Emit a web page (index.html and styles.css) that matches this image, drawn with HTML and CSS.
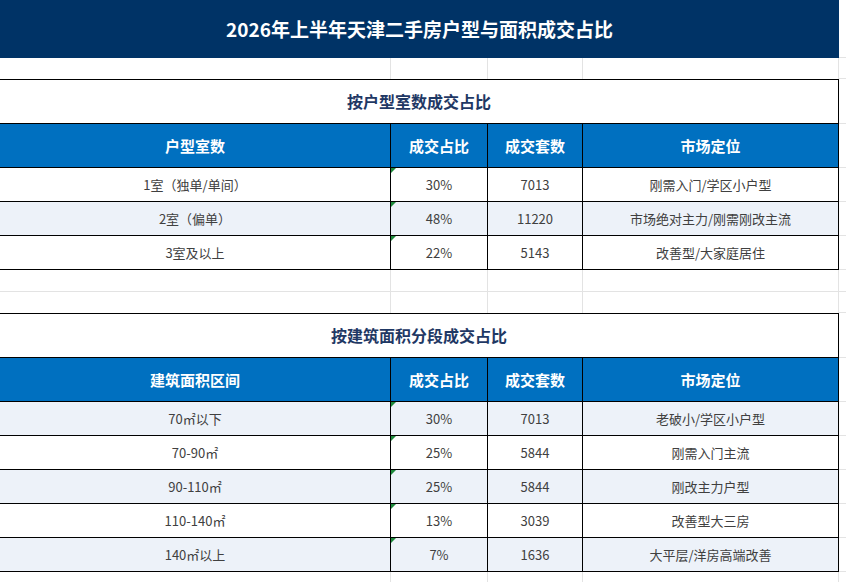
FILE: index.html
```html
<!DOCTYPE html>
<html lang="zh-CN">
<head>
<meta charset="utf-8">
<title>2026年上半年天津二手房户型与面积成交占比</title>
<link rel="stylesheet" href="styles.css">
</head>
<body>
<div class="sheet">
  <div class="row r-title">
    <div class="title">2026年上半年天津二手房户型与面积成交占比</div>
    <div class="cx"></div>
  </div>
  <div class="row r-blank h21">
    <div class="g c1"></div><div class="g c2"></div><div class="g c3"></div><div class="g c4"></div><div class="cx"></div>
  </div>

  <div class="row r-sec">
    <div class="sec">按户型室数成交占比</div>
    <div class="cx"></div>
  </div>
  <div class="row r-head">
    <div class="hd c1">户型室数</div><div class="hd c2">成交占比</div><div class="hd c3">成交套数</div><div class="hd c4">市场定位</div><div class="cx"></div>
  </div>
  <div class="row r-data">
    <div class="d c1">1室（独单/单间）</div><div class="d c2 mark">30%</div><div class="d c3">7013</div><div class="d c4">刚需入门/学区小户型</div><div class="cx"></div>
  </div>
  <div class="row r-data alt">
    <div class="d c1">2室（偏单）</div><div class="d c2 mark">48%</div><div class="d c3">11220</div><div class="d c4">市场绝对主力/刚需刚改主流</div><div class="cx"></div>
  </div>
  <div class="row r-data">
    <div class="d c1">3室及以上</div><div class="d c2 mark">22%</div><div class="d c3">5143</div><div class="d c4">改善型/大家庭居住</div><div class="cx"></div>
  </div>

  <div class="row r-blank h22 lined">
    <div class="g c1"></div><div class="g c2"></div><div class="g c3"></div><div class="g c4"></div><div class="cx"></div>
  </div>
  <div class="row r-blank h21">
    <div class="g c1"></div><div class="g c2"></div><div class="g c3"></div><div class="g c4"></div><div class="cx"></div>
  </div>

  <div class="row r-sec">
    <div class="sec">按建筑面积分段成交占比</div>
    <div class="cx"></div>
  </div>
  <div class="row r-head">
    <div class="hd c1">建筑面积区间</div><div class="hd c2">成交占比</div><div class="hd c3">成交套数</div><div class="hd c4">市场定位</div><div class="cx"></div>
  </div>
  <div class="row r-data alt">
    <div class="d c1">70㎡以下</div><div class="d c2 mark">30%</div><div class="d c3">7013</div><div class="d c4">老破小/学区小户型</div><div class="cx"></div>
  </div>
  <div class="row r-data">
    <div class="d c1">70-90㎡</div><div class="d c2 mark">25%</div><div class="d c3">5844</div><div class="d c4">刚需入门主流</div><div class="cx"></div>
  </div>
  <div class="row r-data alt">
    <div class="d c1">90-110㎡</div><div class="d c2 mark">25%</div><div class="d c3">5844</div><div class="d c4">刚改主力户型</div><div class="cx"></div>
  </div>
  <div class="row r-data">
    <div class="d c1">110-140㎡</div><div class="d c2 mark">13%</div><div class="d c3">3039</div><div class="d c4">改善型大三房</div><div class="cx"></div>
  </div>
  <div class="row r-data alt">
    <div class="d c1">140㎡以上</div><div class="d c2 mark">7%</div><div class="d c3">1636</div><div class="d c4">大平层/洋房高端改善</div><div class="cx"></div>
  </div>

  <div class="row r-blank h22">
    <div class="g c1"></div><div class="g c2"></div><div class="g c3"></div><div class="g c4"></div><div class="cx"></div>
  </div>
</div>
</body>
</html>
```

FILE: styles.css
```css
html, body {
  margin: 0;
  padding: 0;
  background: #ffffff;
}
body {
  font-family: "Noto Sans CJK SC", "Noto Sans", "Liberation Sans", sans-serif;
  color: #404040;
  overflow: hidden;
}
.sheet {
  width: 846px;
}
.row {
  display: flex;
}
.row > div {
  box-sizing: border-box;
}
.c1 { width: 391px; }
.c2 { width: 97px; }
.c3 { width: 95px; }
.c4 { width: 256px; }
.cx {
  flex: 1;
  border-bottom: 1px solid #e3e3e3;
}

/* title band */
.r-title { height: 58px; }
.title {
  width: 839px;
  height: 58px;
  background: #003366;
  color: #ffffff;
  font-size: 19px;
  font-weight: 700;
  display: flex;
  align-items: center;
  justify-content: center;
  padding-bottom: 1px;
}
.r-title .cx { border-bottom: 1px solid #e3e3e3; }

/* blank grid rows */
.h21 { height: 21px; }
.h22 { height: 22px; }
.g {
  border-right: 1px solid #e3e3e3;
}
.lined .g { border-bottom: 1px solid #e3e3e3; }

/* section title */
.r-sec { height: 45px; }
.sec {
  width: 839px;
  border-top: 1px solid #000;
  border-bottom: 1px solid #000;
  border-right: 1px solid #000;
  color: #1f3864;
  font-size: 16px;
  font-weight: 700;
  display: flex;
  align-items: center;
  justify-content: center;
  padding-bottom: 1px;
}

/* header row */
.r-head { height: 44px; }
.hd {
  background: #0070c0;
  color: #ffffff;
  font-size: 15px;
  font-weight: 700;
  border-right: 1px solid #000;
  border-bottom: 1px solid #000;
  display: flex;
  align-items: center;
  justify-content: center;
}

/* data rows */
.r-data { height: 34px; }
.d {
  font-size: 13px;
  color: #404040;
  border-right: 1px solid #000;
  border-bottom: 1px solid #000;
  display: flex;
  align-items: center;
  justify-content: center;
  background: #ffffff;
}
.alt .d { background: #edf2f9; }

.mark { position: relative; }
.mark::before {
  content: "";
  position: absolute;
  left: 0;
  top: 0;
  width: 0;
  height: 0;
  border-top: 5px solid #1e8a3c;
  border-right: 5px solid transparent;
}
```
